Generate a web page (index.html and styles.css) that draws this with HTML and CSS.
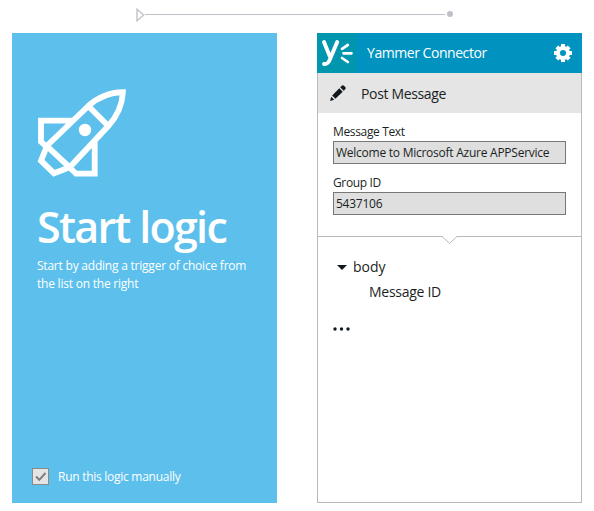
FILE: index.html
```html
<!DOCTYPE html>
<html lang="en">
<head>
<meta charset="utf-8">
<title>Logic designer</title>
<link rel="stylesheet" href="styles.css">
</head>
<body>
<main class="designer">
  <div class="link-row">
    <svg class="link-arrow" width="9" height="14" viewBox="0 0 9 14"><path d="M1 1.2V12.800L7.600 7Z"/></svg>
    <span class="link-line"></span>
    <span class="link-dot"></span>
  </div>
  <div class="cards">
    <section class="start">
      <svg class="rocket" width="92" height="92" viewBox="0 0 92 92">
        <path d="M9.700 60L51.300 20Q66 6.500 85.900 6.100Q85 25 71.300 40L32.700 81.300ZM51.300 20L71.300 40M34.700 34.700H4V55.700L9.700 60.700L4 74.700L17 87.300L32.500 81.300L39 87.700H57.700V56"/>
        <circle cx="48" cy="44" r="6.200"/>
      </svg>
      <h1 class="start-title">Start logic</h1>
      <p class="start-text">Start by adding a trigger of choice from<br>the list on the right</p>
      <label class="manual"><span class="check"><svg width="15" height="15" viewBox="0 0 15 15"><path d="M3 7.500L6.300 10.800L12.500 4"/></svg></span><span class="manual-text">Run this logic manually</span></label>
    </section>
    <section class="connector">
      <header class="connector-head">
        <svg class="yammer" width="39" height="40" viewBox="0 0 39 40"><path class="stem" d="M7 9L13.300 24.500M20.200 9L13.300 25.500Q11.300 31.500 7 31"/><path class="rays" d="M25 15.800L30.800 12M26.500 20.300H34.500M25 25L30.800 29"/></svg>
        <h2 class="connector-name">Yammer Connector</h2>
        <svg class="gear" width="18" height="18" viewBox="-9 -9 18 18"><circle r="5" /><path d="M0-9V-5M0 5V9M-9 0H-5M5 0H9M-6.200-6.200L-3.800-3.800M3.800 3.800L6.200 6.200M6.200-6.200L3.800-3.800M-3.800 3.800L-6.200 6.200"/></svg>
      </header>
      <div class="action">
        <svg class="pencil" width="16" height="16" viewBox="0 0 16 16"><path d="M0 16L1.300 11.800L4.200 14.700ZM2.200 10.600L9.300 3.300L12.700 6.700L5.400 13.800ZM10.200 2.300L11.700.8Q12.900-.2 14 .8L15.200 2Q16.200 3.100 15.200 4.300L13.700 5.800Z"/></svg>
        <span class="action-name">Post Message</span>
      </div>
      <div class="fields">
        <div class="label">Message Text</div>
        <div class="input">Welcome to Microsoft Azure APPService</div>
        <div class="label label-next">Group ID</div>
        <div class="input">5437106</div>
      </div>
      <div class="divider"><svg width="15" height="8" viewBox="0 0 15 8"><path class="notch-fill" d="M0 0H15L7.500 8Z"/><path class="notch" d="M0 .5L7.500 7.300L15 .5"/></svg></div>
      <div class="outputs">
        <div class="body-row"><svg width="10" height="5" viewBox="0 0 10 5"><path d="M0 0H10L5 5Z"/></svg><span class="body-name">body</span></div>
        <div class="message-row">Message ID</div>
        <svg class="more" width="17" height="4" viewBox="0 0 17 4"><circle cx="2" cy="2" r="1.700"/><circle cx="8.500" cy="2" r="1.700"/><circle cx="15" cy="2" r="1.700"/></svg>
      </div>
    </section>
  </div>
</main>
</body>
</html>
```

FILE: styles.css
```css
* { box-sizing: border-box; }
body { margin: 0; background: #fff; color: #1b1f23; font-family: "Open Sans", "Noto Sans", sans-serif; }
h1, h2, p { margin: 0; }
svg { display: block; flex: none; fill: none; }
span { white-space: nowrap; }
.designer { width: 594px; height: 511px; padding: 8px 12px; overflow: hidden; }
.link-row { display: flex; align-items: center; height: 13px; margin: 0 129px 12px 124px; }
.link-arrow path { stroke: #c4c7cc; stroke-width: 1.5; }
.link-line { flex: 1; height: 1px; margin: 0 2px 0 0; background: #bec2c8; }
.link-dot { width: 6px; height: 6px; margin-bottom: 1px; border-radius: 50%; background: #bec2c8; }
.cards { display: flex; gap: 40px; }
.start { display: flex; flex-direction: column; width: 265px; height: 470px; padding: 53px 20px 18px 25px; background: #5dbfec; color: #fff; }
.rocket { stroke: #fff; stroke-width: 5.8; }
.rocket circle { fill: #fff; stroke: none; }
.start-title { height: 58px; margin-top: 20px; font-size: 43px; line-height: 58px; font-weight: 600; letter-spacing: -1.7px; }
.start-text { margin-top: 1px; font-size: 12px; line-height: 18px; letter-spacing: -.22px; }
.manual { display: flex; align-items: center; gap: 9px; height: 18px; margin: auto 0 0 -5px; font-size: 12px; line-height: 18px; letter-spacing: -.27px; }
.manual-text { padding-top: 2px; }
.check { width: 17px; height: 17px; border: 1px solid #8a8a8a; background: #e5e5e5; }
.check path { stroke: #7d8184; stroke-width: 2; }
.connector { width: 265px; height: 470px; border: 1px solid #bababa; border-top: 0; }
.connector-head { display: flex; align-items: center; height: 40px; margin: 0 -1px; padding-right: 10px; background: #0093bf; color: #fff; }
.yammer { background: #0096ad; stroke: #fff; stroke-linecap: round; }
.stem { stroke-width: 3.9; }
.rays { stroke-width: 2.7; }
.connector-name { flex: 1; margin-left: 11px; font-size: 14px; line-height: 20px; font-weight: 400; letter-spacing: -.45px; }
.gear { stroke: #fff; stroke-width: 4; }
.action { display: flex; align-items: center; height: 40px; padding-left: 12px; gap: 15px; background: #e5e5e5; font-size: 14px; letter-spacing: -.35px; }
.pencil path { fill: #101920; }
.fields { height: 123px; padding: 10px 15px 0; font-size: 12px; }
.label { height: 18px; line-height: 18px; letter-spacing: -.35px; }
.label-next { margin-top: 10px; }
.input { height: 23px; padding-left: 2px; border: 1px solid #777; background: #dfdfdf; line-height: 21px; letter-spacing: -.25px; }
.divider { display: flex; justify-content: center; height: 8px; border-top: 1px solid #bababa; }
.divider svg { margin-top: -1px; }
.notch-fill { fill: #fff; }
.notch { stroke: #bababa; }
.outputs { padding: 13px 15px; font-size: 14px; line-height: 20px; }
.body-row { display: flex; align-items: center; gap: 6px; padding-left: 4px; }
.body-row svg path { fill: #101920; }
.message-row { margin-top: 5px; padding-left: 36px; letter-spacing: -.28px; }
.more { margin-top: 25px; fill: #101920; }
```
